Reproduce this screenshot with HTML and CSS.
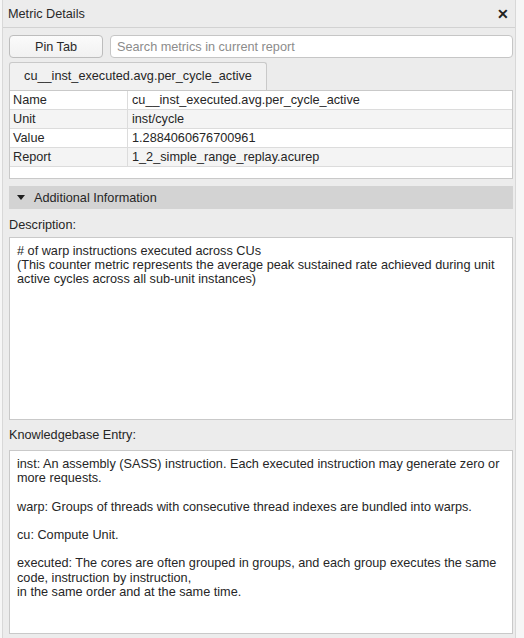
FILE: index.html
```html
<!DOCTYPE html>
<html lang="en">
<head>
    <meta charset="UTF-8">
    <title>Metric Details</title>
    <link rel="stylesheet" href="styles.css">
</head>
<body>

<div class="panel">
    <div class="titlebar">
        <span class="title">Metric Details</span>
        <span class="close">&#x2715;</span>
    </div>

    <div class="content">
        <div class="toolbar">
            <button class="pin-btn">Pin Tab</button>
            <input class="search" type="text" placeholder="Search metrics in current report">
        </div>

        <div class="tabs">
            <div class="tab">cu__inst_executed.avg.per_cycle_active</div>
        </div>

        <div class="props">
            <div class="row">
                <div class="key">Name</div>
                <div class="val">cu__inst_executed.avg.per_cycle_active</div>
            </div>
            <div class="row alt">
                <div class="key">Unit</div>
                <div class="val">inst/cycle</div>
            </div>
            <div class="row">
                <div class="key">Value</div>
                <div class="val">1.2884060676700961</div>
            </div>
            <div class="row alt">
                <div class="key">Report</div>
                <div class="val">1_2_simple_range_replay.acurep</div>
            </div>
        </div>

        <div class="section">
            <span class="arrow"></span>
            <span>Additional Information</span>
        </div>

        <div class="label">Description:</div>
        <div class="textbox desc">
            # of warp instructions executed across CUs<br>
            (This counter metric represents the average peak sustained rate achieved during unit<br>
            active cycles across all sub-unit instances)
        </div>

        <div class="label kb-label">Knowledgebase Entry:</div>
        <div class="textbox kb">
            <p>inst: An assembly (SASS) instruction. Each executed instruction may generate zero or<br>more requests.</p>
            <p>warp: Groups of threads with consecutive thread indexes are bundled into warps.</p>
            <p>cu: Compute Unit.</p>
            <p>executed: The cores are often grouped in groups, and each group executes the same<br>code, instruction by instruction,<br>in the same order and at the same time.</p>
        </div>
    </div>
</div>

</body>
</html>
```

FILE: styles.css
```css
/* General */
* {
    box-sizing: border-box;
    margin: 0;
    padding: 0;
}

body {
    font-family: "Liberation Sans", Arial, sans-serif;
    font-size: 12.7px;
    color: #262626;
    background-color: #f6f6f6;
    width: 524px;
    height: 638px;
    overflow: hidden;
}

/* Dock panel */
.panel {
    margin-left: 2px;
    width: 514px;
    height: 638px;
    background-color: #ececec;
    border-left: 1px solid #d8d8d8;
    border-right: 1px solid #d8d8d8;
}

/* Title bar */
.titlebar {
    height: 28px;
    display: flex;
    align-items: center;
    justify-content: space-between;
    padding: 0 6px 0 5px;
    border-bottom: 1px solid #d2d2d2;
}

.title {
    color: #2a2a2a;
}

.close {
    font-size: 14px;
    font-weight: bold;
    color: #222;
}

.content {
    padding: 7px 2px 0 6px;
}

/* Pin button + search */
.toolbar {
    display: flex;
    gap: 7px;
    height: 23px;
}

.pin-btn {
    width: 94px;
    font-family: inherit;
    font-size: 12.7px;
    color: #2a2a2a;
    background: linear-gradient(#fbfbfb, #f1f1f1);
    border: 1px solid #bdbdbd;
    border-radius: 4px;
}

.search {
    flex: 1;
    font-family: inherit;
    font-size: 12.7px;
    padding: 0 6px;
    background-color: #ffffff;
    border: 1px solid #c6c6c6;
    border-radius: 4px;
    outline: none;
}

.search::placeholder {
    color: #8c8c8c;
}

/* Tab */
.tabs {
    margin-top: 4px;
    display: flex;
}

.tab {
    width: 258px;
    height: 28px;
    line-height: 27px;
    text-align: center;
    background-color: #f1f1f1;
    border: 1px solid #c9c9c9;
    border-bottom: none;
    border-radius: 3px 3px 0 0;
}

/* Property table */
.props {
    background-color: #ffffff;
    border: 1px solid #c9c9c9;
    height: 89px;
}

.row {
    display: flex;
    height: 19px;
    line-height: 18px;
    border-bottom: 1px solid #dcdcdc;
}

.row.alt {
    background-color: #f4f4f4;
}

.key {
    width: 118px;
    padding-left: 3px;
    border-right: 1px solid #dcdcdc;
}

.val {
    padding-left: 4px;
}

/* Collapsible section */
.section {
    margin-top: 7px;
    height: 23px;
    display: flex;
    align-items: center;
    gap: 9px;
    padding-left: 8px;
    background-color: #d3d3d3;
}

.arrow {
    width: 0;
    height: 0;
    border-left: 4px solid transparent;
    border-right: 4px solid transparent;
    border-top: 5px solid #1e1e1e;
}

.label {
    height: 28px;
    line-height: 32px;
}

.kb-label {
    height: 30px;
    line-height: 31px;
}

/* Text boxes */
.textbox {
    background-color: #ffffff;
    border: 1px solid #c9c9c9;
    padding: 6px 7px;
    line-height: 14.2px;
    white-space: nowrap;
}

.desc {
    height: 183px;
}

.kb {
    height: 184px;
}

.kb p {
    margin-bottom: 14.2px;
}
```
